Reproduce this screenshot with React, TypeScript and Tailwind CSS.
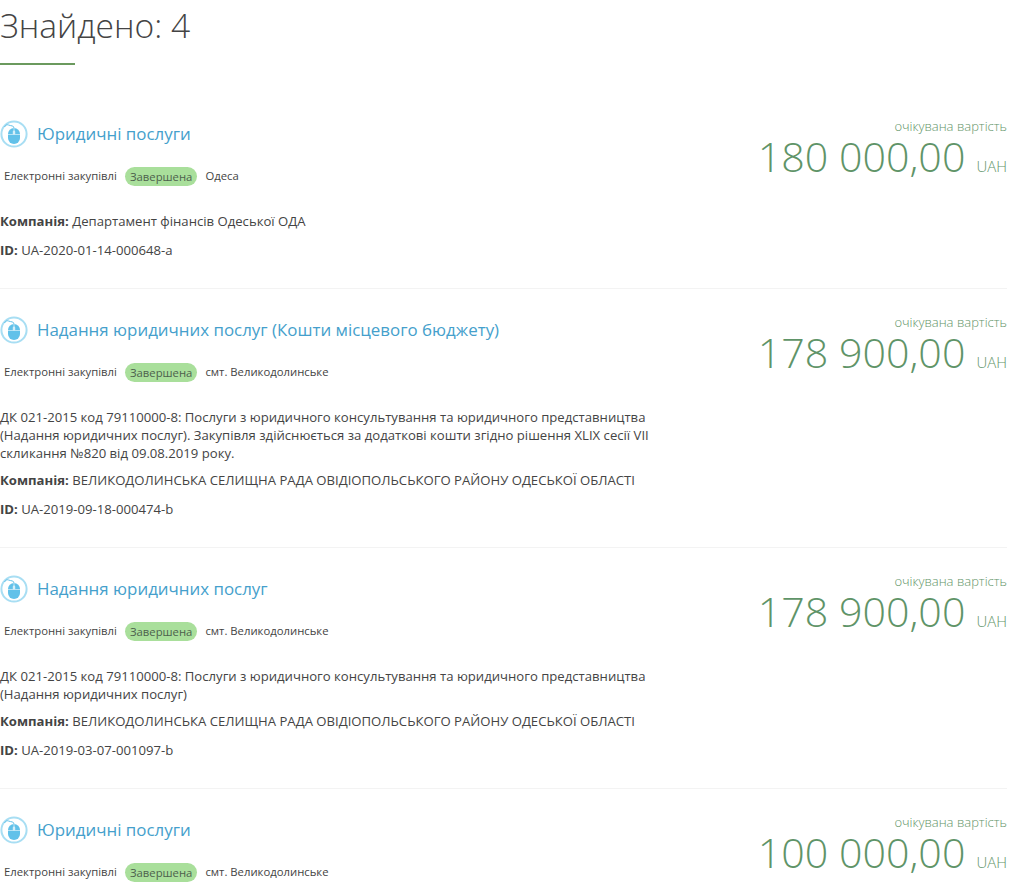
const tenders = [
  {
    title: "Юридичні послуги",
    city: "Одеса",
    company: "Департамент фінансів Одеської ОДА",
    id: "UA-2020-01-14-000648-a",
    amount: "180 000,00",
  },
  {
    title: "Надання юридичних послуг (Кошти місцевого бюджету)",
    city: "смт. Великодолинське",
    description:
      "ДК 021-2015 код 79110000-8: Послуги з юридичного консультування та юридичного представництва (Надання юридичних послуг). Закупівля здійснюється за додаткові кошти згідно рішення XLIX сесії VII скликання №820 від 09.08.2019 року.",
    company: "ВЕЛИКОДОЛИНСЬКА СЕЛИЩНА РАДА ОВІДІОПОЛЬСЬКОГО РАЙОНУ ОДЕСЬКОЇ ОБЛАСТІ",
    id: "UA-2019-09-18-000474-b",
    amount: "178 900,00",
  },
  {
    title: "Надання юридичних послуг",
    city: "смт. Великодолинське",
    description:
      "ДК 021-2015 код 79110000-8: Послуги з юридичного консультування та юридичного представництва (Надання юридичних послуг)",
    company: "ВЕЛИКОДОЛИНСЬКА СЕЛИЩНА РАДА ОВІДІОПОЛЬСЬКОГО РАЙОНУ ОДЕСЬКОЇ ОБЛАСТІ",
    id: "UA-2019-03-07-001097-b",
    amount: "178 900,00",
  },
  {
    title: "Юридичні послуги",
    city: "смт. Великодолинське",
    company: "",
    id: "",
    amount: "100 000,00",
  },
];

function MouseIcon() {
  return (
    <svg width="28" height="28" viewBox="0 0 28 28" fill="none" className="shrink-0">
      <circle cx="14" cy="14" r="12.6" stroke="#a8def3" strokeWidth="2" fill="#fff" />
      {/* mouse body */}
      <rect x="8" y="8" width="12" height="16" rx="6" fill="#62c1e9" />
      <path d="M8 14.5h12" stroke="#cfedf8" strokeWidth="0.8" />
      <path d="M14 8v6.5" stroke="#cfedf8" strokeWidth="0.8" />
      <rect x="12.8" y="10.5" width="2.4" height="4" rx="1.2" fill="#d5eff9" />
      {/* cable */}
      <path d="M14 8C14 5.5 11 6 8.5 5 7 4.4 5.5 5 4.5 7" stroke="#62c1e9" strokeWidth="1" />
    </svg>
  );
}

export default function App() {
  return (
    <div className="h-[891px] overflow-hidden bg-white pr-[18px] font-['Open_Sans',sans-serif] text-[13.13px] text-[#444]">
      <h1 className="text-[33.6px] leading-[50px] font-light text-[#444]">Знайдено: 4</h1>
      <div className="mt-[13px] h-[2px] w-[75px] bg-[#6b9a5e]" />

      <div className="mt-[28px]">
        {tenders.map((t, i) => (
          <div key={i} className="flex justify-between border-b border-[#f3f3f3] pt-[27px] pb-[29px]">
            <div className="w-[660px]">
              <div className="flex items-center gap-[9px]">
                <MouseIcon />
                <a className="text-[16.9px] leading-[28px] text-[#459fcc]">{t.title}</a>
              </div>
              <div className="mt-[19px] flex items-center pl-[4px] text-[11.3px]">
                <span>Електронні закупівлі</span>
                <span className="mx-[8px] rounded-[10px] bg-[#a9df9b] px-[5px] leading-[19px] text-[#4d5f4d]">Завершена</span>
                <span>{t.city}</span>
              </div>
              {t.description && <p className="mt-[26px] leading-[18px]">{t.description}</p>}
              {t.company && (
                <p className={t.description ? "mt-[9px] leading-[18px]" : "mt-[26px] leading-[18px]"}>
                  <b>Компанія:</b> {t.company}
                </p>
              )}
              {t.id && (
                <p className="mt-[11px] leading-[18px]">
                  <b>ID:</b> {t.id}
                </p>
              )}
            </div>
            <div className="-mt-[3px] text-right text-[#5f9468]">
              <div className="text-[13px] leading-[18px] font-light">очікувана вартість</div>
              <div className="mt-[2px] flex items-baseline justify-end">
                <span className="text-[41.2px] leading-[38px] font-light">{t.amount}</span>
                <span className="ml-[11px] text-[15px] leading-[38px] font-light">UAH</span>
              </div>
            </div>
          </div>
        ))}
      </div>
    </div>
  );
}
